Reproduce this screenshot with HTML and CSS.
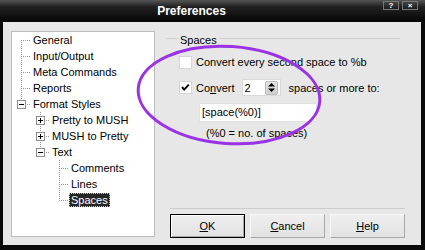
FILE: index.html
```html
<!DOCTYPE html>
<html>
<head>
<meta charset="utf-8">
<link rel="stylesheet" href="styles.css">
</head>
<body>
<div class="window">
  <div class="titlebar">
    <div class="title">Preferences</div>
    <div class="caption-buttons">
      <div class="cap-btn">?</div>
      <div class="cap-btn">×</div>
    </div>
  </div>
  <div class="client">
    <div class="tree">
      <div class="row"><span class="cell first"></span><span class="label">General</span></div>
      <div class="row"><span class="cell tee"></span><span class="label">Input/Output</span></div>
      <div class="row"><span class="cell tee"></span><span class="label">Meta Commands</span></div>
      <div class="row"><span class="cell tee"></span><span class="label">Reports</span></div>
      <div class="row"><span class="cell last"><span class="exp minus"></span></span><span class="label">Format Styles</span></div>
      <div class="row"><span class="cell"></span><span class="cell tee"><span class="exp plus"></span></span><span class="label">Pretty to MUSH</span></div>
      <div class="row"><span class="cell"></span><span class="cell tee"><span class="exp plus"></span></span><span class="label">MUSH to Pretty</span></div>
      <div class="row"><span class="cell"></span><span class="cell last"><span class="exp minus"></span></span><span class="label">Text</span></div>
      <div class="row"><span class="cell"></span><span class="cell"></span><span class="cell tee"></span><span class="label">Comments</span></div>
      <div class="row"><span class="cell"></span><span class="cell"></span><span class="cell tee"></span><span class="label">Lines</span></div>
      <div class="row"><span class="cell"></span><span class="cell"></span><span class="cell last"></span><span class="label selected">Spaces</span></div>
    </div>
    <div class="panel">
      <div class="group-title">Spaces</div>
      <div class="options">
        <div class="opt opt1">
          <span class="checkbox"></span>
          <span>Convert every second space to %b</span>
        </div>
        <div class="opt opt2">
          <span class="checkbox checked">
            <svg width="13" height="13" viewBox="0 0 13 13"><polyline points="3,6 5.2,8.6 9.8,3.6" fill="none" stroke="#000" stroke-width="2"/></svg>
          </span>
          <span class="conv">Co<u>n</u>vert</span>
          <span class="spin">
            <span class="spin-val">2</span>
            <span class="spin-btn">
              <svg width="11" height="13" viewBox="0 0 11 13"><polygon points="2,5.5 5.5,2 9,5.5" fill="#000"/><polygon points="2,7.5 9,7.5 5.5,11" fill="#000"/></svg>
            </span>
          </span>
          <span class="after">spaces or more to:</span>
        </div>
        <div class="textbox">[space(%0)]</div>
        <div class="note">(%0 = no. of spaces)</div>
      </div>
      <div class="footer">
        <div class="btn default"><u>O</u>K</div>
        <div class="btn"><u>C</u>ancel</div>
        <div class="btn"><u>H</u>elp</div>
      </div>
    </div>
  </div>
  <svg class="ring" width="425" height="250" viewBox="0 0 425 250">
    <ellipse cx="229" cy="95" rx="91" ry="48.5" transform="rotate(4 229 95)" fill="none" stroke="#9a32e6" stroke-width="3"/>
  </svg>
</div>
</body>
</html>
```
FILE: styles.css
```css
html, body {
  margin: 0;
  padding: 0;
  background: #000;
}
.window {
  position: relative;
  width: 425px;
  height: 250px;
  display: flex;
  flex-direction: column;
  background: #0a0a0a;
  font-family: "Liberation Sans", Arial, sans-serif;
  font-size: 11px;
  color: #000;
  overflow: hidden;
}
.titlebar {
  height: 22px;
  display: flex;
  background: linear-gradient(#555 0, #222 30%, #050505 100%);
}
.title {
  flex: 1;
  text-align: center;
  color: #fff;
  font-weight: bold;
  font-size: 12px;
  line-height: 22px;
}
.caption-buttons {
  display: flex;
  gap: 3px;
  margin: 1px 7px 0 0;
  align-items: flex-start;
}
.cap-btn {
  width: 14px;
  height: 7px;
  border: 1px solid #777;
  background: linear-gradient(#444, #1a1a1a);
  color: #fff;
  font-size: 8px;
  font-weight: bold;
  line-height: 7px;
  text-align: center;
}
.client {
  flex: 1;
  margin: 0 4px 5px 3px;
  background: #e7e7e7;
  display: flex;
  align-items: flex-start;
  padding: 9px 0 0 8px;
}
.tree {
  box-sizing: border-box;
  width: 144px;
  height: 206px;
  background: #fff;
  border: 1px solid #bcbcbc;
  padding-top: 0;
}
.row {
  display: flex;
  height: 16px;
  align-items: center;
}
.cell {
  width: 19px;
  height: 16px;
  flex: none;
  display: flex;
  align-items: center;
  background-repeat: no-repeat;
}
.tee, .first, .last {
  background-image:
    repeating-linear-gradient(to bottom, #9a9a9a 0 1px, transparent 1px 2px),
    repeating-linear-gradient(to right, #9a9a9a 0 1px, transparent 1px 2px);
  background-repeat: no-repeat;
}
.tee {
  background-size: 1px 16px, 9px 1px;
  background-position: 9px 0, 11px 8px;
}
.first {
  background-size: 1px 8px, 9px 1px;
  background-position: 9px 8px, 11px 8px;
}
.last {
  background-size: 1px 9px, 9px 1px;
  background-position: 9px 0, 11px 8px;
}
.exp {
  box-sizing: border-box;
  width: 9px;
  height: 9px;
  margin-left: 5px;
  margin-top: 1px;
  border: 1px solid #8e8e8e;
  background: #fff;
  position: relative;
}
.exp::before {
  content: "";
  position: absolute;
  left: 1px;
  top: 3px;
  width: 5px;
  height: 1px;
  background: #000;
}
.plus::after {
  content: "";
  position: absolute;
  left: 3px;
  top: 1px;
  width: 1px;
  height: 5px;
  background: #000;
}
.label {
  padding: 0 2px;
  height: 14px;
  line-height: 14px;
  white-space: nowrap;
}
.selected {
  background: #262626;
  color: #fff;
  outline: 1px dotted #c8c8c8;
  outline-offset: -1px;
}
.panel {
  width: 239px;
  height: 207px;
  margin-left: 11px;
  display: flex;
  flex-direction: column;
}
.group-title {
  display: flex;
  align-items: flex-start;
  height: 18px;
  line-height: 18px;
  margin-right: 5px;
}
.group-title::before,
.group-title::after {
  content: "";
  height: 0;
  border-top: 1px solid #cfcfcf;
  margin-top: 7px;
}
.group-title::before {
  width: 12px;
  margin-right: 2px;
}
.group-title::after {
  flex: 1;
  margin-left: 3px;
}
.options {
  padding-left: 13px;
}
.opt {
  display: flex;
  align-items: center;
}
.opt1 {
  height: 16px;
  margin-top: 5px;
}
.opt2 {
  height: 17px;
  margin-top: 9px;
}
.checkbox {
  box-sizing: border-box;
  width: 13px;
  height: 13px;
  background: #fff;
  border: 1px solid #d6d6d6;
  margin-right: 4px;
  flex: none;
  display: flex;
}
.checkbox svg {
  margin: -1px;
}
.conv {
  margin-right: 7px;
}
.spin {
  box-sizing: border-box;
  width: 39px;
  height: 17px;
  background: #fff;
  border: 1px solid #dadada;
  display: flex;
  align-items: center;
  justify-content: space-between;
  padding: 0 2px 0 2px;
}
.spin-btn {
  box-sizing: border-box;
  width: 13px;
  height: 14px;
  background: linear-gradient(#e4e4e4, #cfcfcf);
  border: 1px solid #bdbdbd;
  border-radius: 2px;
  display: flex;
  align-items: center;
  justify-content: center;
}
.after {
  margin-left: 8px;
}
.textbox {
  box-sizing: border-box;
  width: 118px;
  height: 19px;
  margin: 7px 0 0 20px;
  background: #fff;
  border: 1px solid #e0e0e0;
  line-height: 17px;
  padding-left: 2px;
}
.note {
  margin: 4px 0 0 27px;
  line-height: 14px;
}
.footer {
  margin-top: auto;
  margin-left: 4px;
  border-top: 1px solid #cdcdcd;
  padding-top: 5px;
  display: flex;
  gap: 5px;
}
.btn {
  box-sizing: border-box;
  width: 75px;
  height: 24px;
  line-height: 22px;
  text-align: center;
  background: linear-gradient(#efefef, #e2e2e2);
  border: 1px solid;
  border-color: #f8f8f8 #a8a8a8 #a8a8a8 #f8f8f8;
}
.btn.default {
  border: 1px solid #000;
  box-shadow: inset 1px 1px 0 #fff, inset -1px -1px 0 #a8a8a8;
}
.ring {
  position: absolute;
  left: 0;
  top: 0;
  pointer-events: none;
}
```
